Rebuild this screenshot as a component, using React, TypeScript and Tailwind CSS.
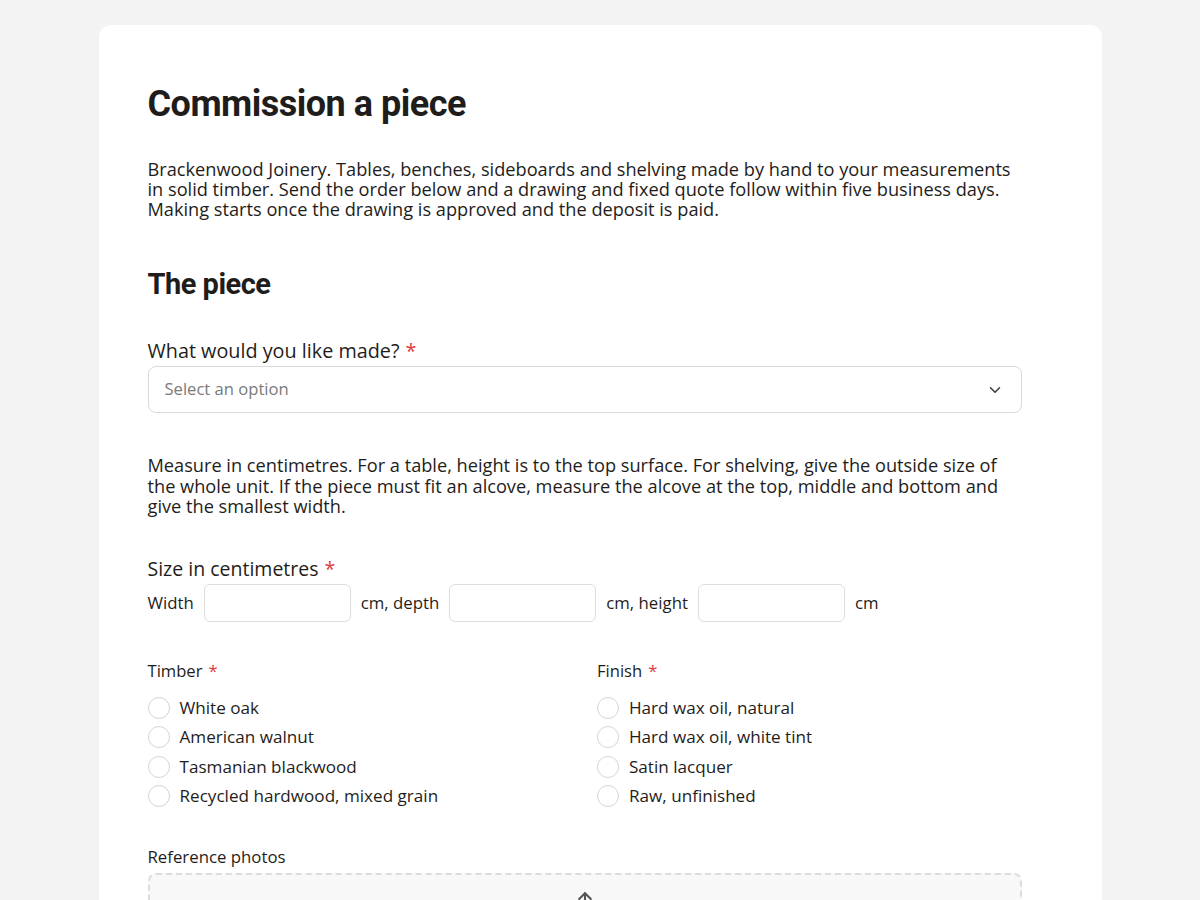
import { ChevronDown, ArrowUp } from 'lucide-react';

const body = "font-['Open_Sans','Lato',sans-serif]";
const heading = "font-['Roboto','Liberation_Sans',sans-serif]";

const timbers = ['White oak', 'American walnut', 'Tasmanian blackwood', 'Recycled hardwood, mixed grain'];
const finishes = ['Hard wax oil, natural', 'Hard wax oil, white tint', 'Satin lacquer', 'Raw, unfinished'];

const Req = () => <span className="text-[#e0393e] ml-1.5">*</span>;

const RadioGroup = ({ label, name, options }: { label: string; name: string; options: string[] }) => (
  <fieldset>
    <legend className="text-[16.6px] leading-[22px] font-medium mb-[15px]">
      {label}
      <Req />
    </legend>
    <div className="flex flex-col gap-[7.5px]">
      {options.map((opt) => (
        <label key={opt} className="flex items-center gap-[10px] text-[17.1px] leading-[22px]">
          <span className="w-[22px] h-[22px] rounded-full border border-[#d6d6d6] bg-white shrink-0" />
          <input type="radio" name={name} className="hidden" />
          {opt}
        </label>
      ))}
    </div>
  </fieldset>
);

const SizeInput = () => (
  <input type="text" className="w-[147px] h-[38px] rounded-md border border-[#dedede] bg-white px-3" />
);

export default function App() {
  return (
    <div className={`min-h-screen bg-[#f3f3f3] pt-[25px] ${body} text-[#1f1d1b]`}>
      <div className="mx-auto w-[1003px] bg-white rounded-xl px-[49px] pt-[59px] pb-10">
        <div className="max-w-[874px]">
          <h1 className={`${heading} text-[36px] leading-[40px] font-bold tracking-[-0.5px]`}>
            Commission a piece
          </h1>

          <p className="mt-[35px] text-[18.2px] leading-[20px]">
            Brackenwood Joinery. Tables, benches, sideboards and shelving made by hand to your measurements in solid
            timber. Send the order below and a drawing and fixed quote follow within five business days. Making starts
            once the drawing is approved and the deposit is paid.
          </p>

          <h2 className={`${heading} mt-[47px] text-[29px] leading-[36px] font-bold tracking-[-0.5px]`}>The piece</h2>

          <label className="block mt-[37px] text-[19.8px] leading-[24px] font-medium">
            What would you like made?
            <Req />
          </label>
          <div className="mt-[3px] h-[47px] rounded-lg border border-[#d9d9d9] flex items-center justify-between pl-4 pr-[17px]">
            <span className="text-[16.6px] text-[#7a7a7a]">Select an option</span>
            <ChevronDown className="w-[18px] h-[18px] text-[#3a3a3a]" strokeWidth={2} />
          </div>

          <p className="mt-[42px] text-[18.2px] leading-[20.5px]">
            Measure in centimetres. For a table, height is to the top surface. For shelving, give the outside size of the
            whole unit. If the piece must fit an alcove, measure the alcove at the top, middle and bottom and give the
            smallest width.
          </p>

          <div className="mt-[40px] text-[19.5px] leading-[24px] font-medium">
            Size in centimetres
            <Req />
          </div>
          <div className="mt-[3px] flex items-center gap-[10px] text-[16.8px]">
            <span>Width</span>
            <SizeInput />
            <span>cm, depth</span>
            <SizeInput />
            <span>cm, height</span>
            <SizeInput />
            <span>cm</span>
          </div>

          <div className="mt-[38px] grid grid-cols-2 gap-x-[25px]">
            <RadioGroup label="Timber" name="timber" options={timbers} />
            <RadioGroup label="Finish" name="finish" options={finishes} />
          </div>

          <div className="mt-[39px] text-[16.8px] leading-[22px] font-medium">Reference photos</div>
          <div className="mt-[5px] h-[140px] rounded-lg border-2 border-dashed border-[#dcdcdc] bg-[#f8f8f8] flex flex-col items-center pt-[14px]">
            <ArrowUp className="w-5 h-5 text-[#555]" strokeWidth={2.5} />
          </div>
        </div>
      </div>
    </div>
  );
}
